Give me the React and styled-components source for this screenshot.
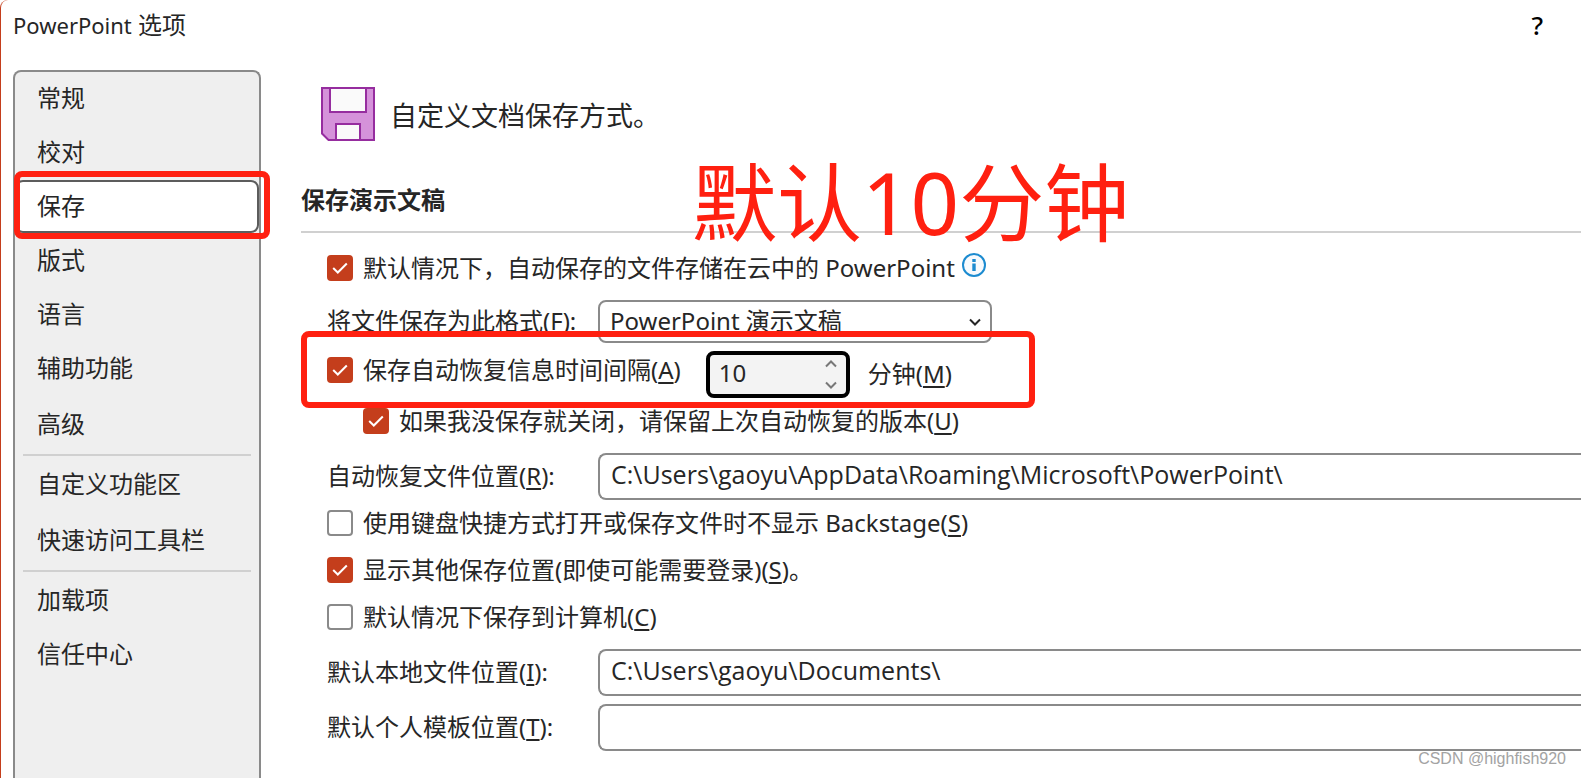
import React, { useState } from 'react';
import styled, { createGlobalStyle, css } from 'styled-components';

const fontStack = '"Noto Sans", "Noto Sans CJK SC", sans-serif';
const accent = '#c43e1c';
const markRed = '#ff2010';
const line = '#8a8a8a';
const ink = '#262626';

const GlobalStyle = createGlobalStyle`
  * { box-sizing: border-box; }
  body {
    margin: 0;
    background: #fff;
    color: ${ink};
    font: 24px/32px ${fontStack};
    overflow: hidden;
  }
  input, select, button { font: inherit; color: inherit; }
`;

const Dialog = styled.div`
  display: flex;
  flex-direction: column;
  min-height: 100vh;
  border-left: 1px solid ${accent};
  border-top-left-radius: 8px;
`;

const TitleBar = styled.header`
  display: flex;
  align-items: center;
  justify-content: space-between;
  height: 52px;
  padding: 0 34px 2px 12px;
`;

const Title = styled.h1`
  margin: 0;
  font-size: 24px;
  font-weight: 400;
`;

const Product = styled.span`
  font-size: 22px;
`;

const HelpButton = styled.button`
  padding: 0 4px;
  border: 0;
  background: none;
  color: #000;
  font-size: 26px;
  font-weight: 500;
`;

const Body = styled.div`
  display: flex;
  flex: 1;
  padding: 18px 0 0 12px;
`;

const Sidebar = styled.nav`
  flex: 0 0 248px;
  border: 2px solid ${line};
  border-bottom: 0;
  border-radius: 8px 8px 0 0;
  background: #efefef;
`;

const NavGroup = styled.div`
  display: flex;
  flex-direction: column;

  & + & {
    border-top: 2px solid #d0d0d0;
    margin: 2px 8px 0;
    padding-top: 2px;
  }
  & + & > button { padding-left: 14px; }
  &:not(:last-child) > button:last-child {
    height: 56px;
    padding-bottom: 0;
  }
`;

const NavItem = styled.button`
  position: relative;
  height: 54px;
  padding: 0 22px 2px;
  border: 0;
  background: none;
  text-align: left;

  ${({ $active }) => $active && css`
    height: 53px;
    margin-bottom: 1px;
    padding: 0 20px 2px;
    border: 2px solid #5c5c5c;
    border-radius: 8px;
    background: #fff;
  `}
`;

const Highlight = styled.span`
  position: absolute;
  border: 6px solid ${markRed};
  border-radius: 8px;
  pointer-events: none;
`;

const NavHighlight = styled(Highlight)`
  inset: -11px -13px -8px -3px;
`;

const RowHighlight = styled(Highlight)`
  top: -20px;
  bottom: -10px;
  left: -26px;
  width: 734px;
`;

const Content = styled.main`
  flex: 1;
  min-width: 0;
  padding: 17px 0 26px 40px;
`;

const Intro = styled.div`
  display: flex;
  align-items: center;
  gap: 15px;
  padding-left: 20px;
  font-size: 27px;

  svg { display: block; }
`;

const IntroText = styled.span`
  padding-top: 4px;
`;

const SectionHead = styled.div`
  position: relative;
  height: 92px;
  padding-top: 43px;
  border-bottom: 2px solid #d0d0d0;
`;

const SectionTitle = styled.h2`
  margin: 0;
  font-size: 24px;
  line-height: 32px;
`;

const Callout = styled.span`
  position: absolute;
  left: 391px;
  bottom: -14px;
  color: ${markRed};
  font-size: 85px;
  line-height: 85px;
  white-space: nowrap;
`;

const Form = styled.form`
  padding: 12px 0 0 26px;
`;

const Row = styled.div`
  position: relative;
  display: flex;
  align-items: center;
  min-height: 47px;
  margin-bottom: ${({ $tight }) => ($tight ? 0 : 8)}px;
  padding-left: ${({ $indent }) => ($indent ? 36 : 0)}px;
  white-space: nowrap;
`;

const SelectRow = styled(Row)`
  min-height: 43px;
`;

const IntervalRow = styled(Row)`
  align-items: flex-start;
`;

const CheckLabel = styled.label`
  display: flex;
  align-items: center;
  gap: 10px;
  height: 40px;
  padding-bottom: 2px;
`;

const CheckBox = styled.span`
  display: grid;
  flex: none;

  > * { grid-area: 1 / 1; }
  svg { pointer-events: none; visibility: hidden; }
  input:checked + svg { visibility: visible; }
`;

const CheckInput = styled.input`
  appearance: none;
  width: 26px;
  height: 26px;
  margin: 0;
  border: 2px solid ${line};
  border-radius: 4px;
  background: #fff;

  &:checked {
    border-color: ${accent};
    background: ${accent};
  }
`;

const FieldLabel = styled.label`
  flex: 0 0 271px;
  padding-bottom: 2px;
`;

const Key = styled.span`
  text-decoration: underline;
  text-decoration-thickness: 2px;
  text-underline-offset: 3px;
  text-decoration-skip-ink: none;
`;

const PathInput = styled.input`
  flex: 1;
  min-width: 0;
  height: 47px;
  padding: 0 11px 5px;
  border: 2px solid ${line};
  border-right: 0;
  border-radius: 8px 0 0 8px;
  background: #fff;
  font-family: "Open Sans", "Noto Sans CJK SC", sans-serif;
  font-size: 25px;
`;

const SelectBox = styled.span`
  display: grid;
  align-items: center;
  width: 394px;

  > * { grid-area: 1 / 1; }
  svg { justify-self: end; margin-right: 11px; pointer-events: none; }
`;

const Select = styled.select`
  appearance: none;
  width: 100%;
  height: 43px;
  padding: 0 10px 2px;
  border: 2px solid ${line};
  border-radius: 8px;
  background: #fff;
`;

const Spinner = styled.span`
  display: flex;
  width: 144px;
  height: 47px;
  margin: 0 18px 0 25px;
  border: 4px solid #000;
  border-radius: 8px;
  background: #f3f3f3;
`;

const SpinInput = styled.input`
  flex: 1;
  min-width: 0;
  padding: 0 0 4px 9px;
  border: 0;
  outline: 0;
  background: none;
  appearance: textfield;

  &::-webkit-inner-spin-button { appearance: none; }
`;

const SpinButtons = styled.span`
  display: flex;
  flex-direction: column;
  gap: 4px;
  width: 30px;
`;

const SpinButton = styled.button`
  display: grid;
  flex: 1;
  place-items: center;
  padding: 0;
  border: 0;
  background: none;
`;

const UnitLabel = styled.label`
  line-height: 46px;
`;

const InfoButton = styled.button`
  margin: 0 0 8px 7px;
  padding: 0;
  border: 0;
  background: none;

  svg { display: block; }
`;

const Watermark = styled.div`
  position: absolute;
  right: 15px;
  bottom: 8px;
  color: #a3a3a3;
  font: 16px/22px "Liberation Sans", sans-serif;
`;

const FloppyIcon = () => (
  <svg width="54" height="54" viewBox="0 0 54 54" aria-hidden="true">
    <path d="M1 1H53V53H7.500L1 46.500Z" fill="#d592da" stroke="#962d9f" strokeWidth="2" />
    <path d="M9 1H45V25H9Z M15 53V37H39V53Z" fill="#fafafa" stroke="#962d9f" strokeWidth="2" />
  </svg>
);

const CheckMark = () => (
  <svg width="26" height="26" viewBox="0 0 26 26" fill="none" aria-hidden="true">
    <path d="M6.200 13L10.800 17.500L19.800 8.500" stroke="#fff" strokeWidth="2" />
  </svg>
);

const InfoIcon = () => (
  <svg width="24" height="24" viewBox="0 0 24 24" aria-hidden="true">
    <circle cx="12" cy="12" r="11" fill="#f7fafd" stroke="#1c8bd0" strokeWidth="2" />
    <path d="M10.300 6H13.700V9H10.300Z M10.300 10.500H13.700V18H10.300Z" fill="#1c8bd0" />
  </svg>
);

const Chevron = ({ up, color }) => (
  <svg width="12" height="8" viewBox="0 0 12 8" fill="none" aria-hidden="true">
    <path d={up ? 'M1 6.500L6 1.500L11 6.500' : 'M1 1.500L6 6.500L11 1.500'} stroke={color} strokeWidth="2" />
  </svg>
);

const CheckField = ({ checked, children }) => (
  <CheckLabel>
    <CheckBox>
      <CheckInput type="checkbox" defaultChecked={checked} />
      <CheckMark />
    </CheckBox>
    <span>{children}</span>
  </CheckLabel>
);

const navGroups = [
  ['常规', '校对', '保存', '版式', '语言', '辅助功能', '高级'],
  ['自定义功能区', '快速访问工具栏'],
  ['加载项', '信任中心'],
];

export default function App() {
  const [minutes, setMinutes] = useState(10);

  return (
    <>
      <GlobalStyle />
      <Dialog>
        <TitleBar>
          <Title><Product>PowerPoint</Product> 选项</Title>
          <HelpButton type="button" aria-label="帮助">?</HelpButton>
        </TitleBar>
        <Body>
          <Sidebar>
            {navGroups.map((items) => (
              <NavGroup key={items[0]}>
                {items.map((item) => (
                  <NavItem key={item} type="button" $active={item === '保存'}>
                    {item}
                    {item === '保存' && <NavHighlight />}
                  </NavItem>
                ))}
              </NavGroup>
            ))}
          </Sidebar>
          <Content>
            <Intro><FloppyIcon /><IntroText>自定义文档保存方式。</IntroText></Intro>
            <SectionHead>
              <SectionTitle>保存演示文稿</SectionTitle>
              <Callout>默认10分钟</Callout>
            </SectionHead>
            <Form>
              <Row>
                <CheckField checked>默认情况下，自动保存的文件存储在云中的 PowerPoint</CheckField>
                <InfoButton type="button" aria-label="信息"><InfoIcon /></InfoButton>
              </Row>
              <SelectRow>
                <FieldLabel htmlFor="format">将文件保存为此格式(<Key>F</Key>):</FieldLabel>
                <SelectBox>
                  <Select id="format"><option>PowerPoint 演示文稿</option></Select>
                  <Chevron color={ink} />
                </SelectBox>
              </SelectRow>
              <IntervalRow $tight>
                <CheckField checked>保存自动恢复信息时间间隔(<Key>A</Key>)</CheckField>
                <Spinner>
                  <SpinInput
                    id="minutes"
                    type="number"
                    value={minutes}
                    onChange={(e) => setMinutes(Number(e.target.value))}
                  />
                  <SpinButtons>
                    <SpinButton type="button" aria-label="增加" onClick={() => setMinutes(minutes + 1)}>
                      <Chevron up color="#777" />
                    </SpinButton>
                    <SpinButton type="button" aria-label="减少" onClick={() => setMinutes(minutes - 1)}>
                      <Chevron color="#777" />
                    </SpinButton>
                  </SpinButtons>
                </Spinner>
                <UnitLabel htmlFor="minutes">分钟(<Key>M</Key>)</UnitLabel>
                <RowHighlight />
              </IntervalRow>
              <Row $indent>
                <CheckField checked>如果我没保存就关闭，请保留上次自动恢复的版本(<Key>U</Key>)</CheckField>
              </Row>
              <Row $tight>
                <FieldLabel htmlFor="recover">自动恢复文件位置(<Key>R</Key>):</FieldLabel>
                <PathInput id="recover" defaultValue={'C:\\Users\\gaoyu\\AppData\\Roaming\\Microsoft\\PowerPoint\\'} />
              </Row>
              <Row $tight>
                <CheckField>使用键盘快捷方式打开或保存文件时不显示 Backstage(<Key>S</Key>)</CheckField>
              </Row>
              <Row $tight>
                <CheckField checked>显示其他保存位置(即使可能需要登录)(<Key>S</Key>)。</CheckField>
              </Row>
              <Row>
                <CheckField>默认情况下保存到计算机(<Key>C</Key>)</CheckField>
              </Row>
              <Row>
                <FieldLabel htmlFor="local">默认本地文件位置(<Key>I</Key>):</FieldLabel>
                <PathInput id="local" defaultValue={'C:\\Users\\gaoyu\\Documents\\'} />
              </Row>
              <Row $tight>
                <FieldLabel htmlFor="template">默认个人模板位置(<Key>T</Key>):</FieldLabel>
                <PathInput id="template" />
              </Row>
            </Form>
          </Content>
        </Body>
        <Watermark>CSDN @highfish920</Watermark>
      </Dialog>
    </>
  );
}
